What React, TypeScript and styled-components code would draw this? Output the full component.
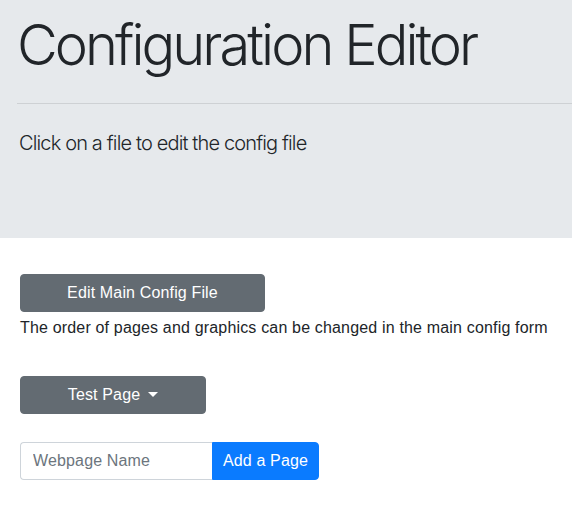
import React from "react";
import styled, { createGlobalStyle } from "styled-components";

const Global = createGlobalStyle`
  html, body { margin: 0; padding: 0; background: #fff; }
  body { font-family: "Liberation Sans", Arial, sans-serif; color: #212529; }
  * { box-sizing: border-box; }
`;

const Jumbotron = styled.header`
  background: #e6e9ec;
  padding: 12px 0 64px 17px;
  font-family: Inter, "Noto Sans", sans-serif;
  color: #212529;
`;

const Title = styled.h1`
  margin: 0;
  font-size: 56px;
  font-weight: 300;
  line-height: 1.2;
  letter-spacing: -2.95px;
`;

const Rule = styled.hr`
  margin: 24px 0;
  border: 0;
  border-top: 1px solid rgba(0, 0, 0, 0.1);
  height: 0;
`;

const Lead = styled.p`
  margin: 0 0 16px 2px;
  font-size: 20px;
  font-weight: 300;
  line-height: 1.5;
  letter-spacing: -0.85px;
`;

const Content = styled.main`
  padding: 36px 20px 0 20px;
  display: flex;
  flex-direction: column;
  align-items: flex-start;
`;

const GrayButton = styled.button<{ $width: number }>`
  width: ${(p) => p.$width}px;
  height: 38px;
  border: 1px solid #636b72;
  background: #636b72;
  color: #fff;
  border-radius: 4px;
  font-family: "Liberation Sans", Arial, sans-serif;
  font-size: 16px;
  line-height: 24px;
  letter-spacing: 0.15px;
  padding: 6px 12px;
  cursor: pointer;
  display: inline-flex;
  align-items: center;
  justify-content: center;
  white-space: nowrap;
`;

const Caret = styled.span`
  display: inline-block;
  margin-left: 8px;
  margin-top: -2px;
  width: 0;
  height: 0;
  border-top: 5px solid #fff;
  border-left: 5px solid transparent;
  border-right: 5px solid transparent;
`;

const Note = styled.p`
  margin: 4px 0 36px;
  font-size: 16px;
  line-height: 24px;
  letter-spacing: 0.17px;
  color: #212529;
`;

const InputGroup = styled.div`
  display: flex;
  margin-top: 28px;
  height: 38px;
`;

const Input = styled.input`
  width: 192px;
  height: 38px;
  border: 1px solid #ced4da;
  border-right: 0;
  border-radius: 4px 0 0 4px;
  padding: 6px 12px;
  font-family: "Liberation Sans", Arial, sans-serif;
  font-size: 16px;
  letter-spacing: 0.15px;
  color: #495057;
  outline: none;
  &::placeholder { color: #6c757d; opacity: 1; }
`;

const BlueButton = styled.button`
  width: 107px;
  height: 38px;
  border: 1px solid #0a7bff;
  background: #0a7bff;
  color: #fff;
  border-radius: 0 4px 4px 0;
  font-family: "Liberation Sans", Arial, sans-serif;
  font-size: 16px;
  line-height: 24px;
  letter-spacing: 0.15px;
  padding: 0;
  white-space: nowrap;
  cursor: pointer;
`;

export default function App() {
  return (
    <>
      <Global />
      <Jumbotron>
        <Title>Configuration Editor</Title>
        <Rule />
        <Lead>Click on a file to edit the config file</Lead>
      </Jumbotron>
      <Content>
        <GrayButton $width={245}>Edit Main Config File</GrayButton>
        <Note>The order of pages and graphics can be changed in the main config form</Note>
        <GrayButton $width={186}>
          Test Page
          <Caret />
        </GrayButton>
        <InputGroup>
          <Input placeholder="Webpage Name" />
          <BlueButton>Add a Page</BlueButton>
        </InputGroup>
      </Content>
    </>
  );
}
